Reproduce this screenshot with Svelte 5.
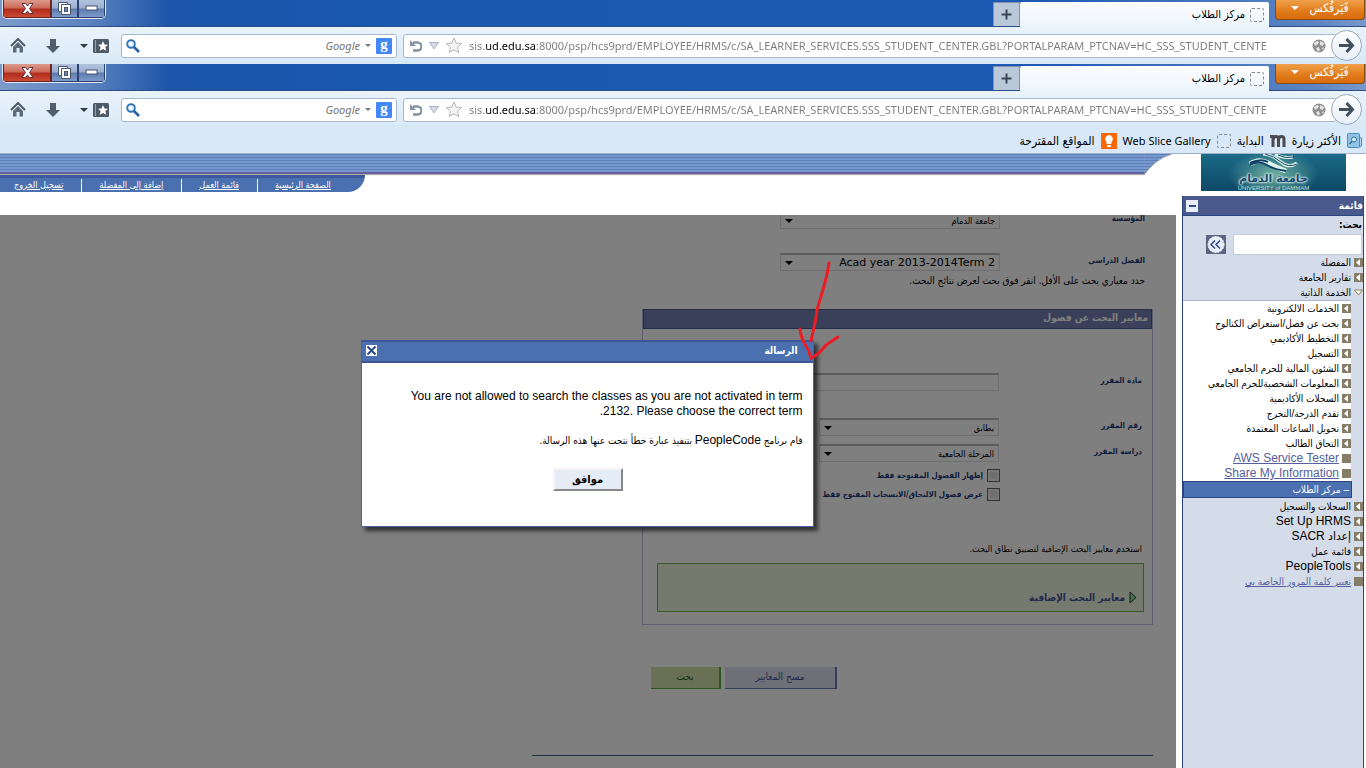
<script lang="ts">
  interface MenuItem {
    label: string;
    kind: 'folder' | 'open' | 'link';
  }

  const url = 'sis.ud.edu.sa:8000/psp/hcs9prd/EMPLOYEE/HRMS/c/SA_LEARNER_SERVICES.SSS_STUDENT_CENTER.GBL?PORTALPARAM_PTCNAV=HC_SSS_STUDENT_CENTE';

  const topLinks = ['الصفحة الرئيسية', 'قائمة العمل', 'إضافة إلى المفضلة', 'تسجيل الخروج'];

  const menuBefore: MenuItem[] = [
    { label: 'المفضلة', kind: 'folder' },
    { label: 'تقارير الجامعة', kind: 'folder' },
    { label: 'الخدمة الذاتية', kind: 'open' },
  ];

  const selfService: MenuItem[] = [
    { label: 'الخدمات الالكترونية', kind: 'folder' },
    { label: 'بحث عن فصل/استعراض الكتالوج', kind: 'folder' },
    { label: 'التخطيط الأكاديمي', kind: 'folder' },
    { label: 'التسجيل', kind: 'folder' },
    { label: 'الشئون المالية للحرم الجامعي', kind: 'folder' },
    { label: 'المعلومات الشخصيةللحرم الجامعي', kind: 'folder' },
    { label: 'السجلات الأكاديمية', kind: 'folder' },
    { label: 'تقدم الدرجة/التخرج', kind: 'folder' },
    { label: 'تحويل الساعات المعتمدة', kind: 'folder' },
    { label: 'التحاق الطالب', kind: 'folder' },
    { label: 'AWS Service Tester', kind: 'link' },
    { label: 'Share My Information', kind: 'link' },
  ];

  const menuAfter: MenuItem[] = [
    { label: 'السجلات والتسجيل', kind: 'folder' },
    { label: 'Set Up HRMS', kind: 'folder' },
    { label: 'إعداد SACR', kind: 'folder' },
    { label: 'قائمة عمل', kind: 'folder' },
    { label: 'PeopleTools', kind: 'folder' },
    { label: 'تغيير كلمة المرور الخاصة بي', kind: 'link' },
  ];

  let dialogOpen = $state(true);

  function hasLatin(text: string): boolean {
    return /[a-z]/i.test(text);
  }
</script>

{#snippet chrome(id: string)}
  <div class="titlebar">
    <button class="firefox">فَيَرفُكس <span class="caret"></span></button>
    <div class="tab">
      <span class="placeholder-icon"></span>
      <span>مركز الطلاب</span>
    </div>
    <button class="new-tab" aria-label="علامة تبويب جديدة">
      <svg width="11" height="11" viewBox="0 0 11 11"><path d="M5.5 0.5v10M0.5 5.5h10" stroke="#3c4652" stroke-width="2" /></svg>
    </button>
    <div class="window-buttons">
      <button aria-label="تصغير">
        <svg width="13" height="7" viewBox="0 0 13 7"><rect x="1" y="1" width="11" height="4" fill="#fff" stroke="#4c5570" /></svg>
      </button>
      <button aria-label="استعادة">
        <svg width="13" height="13" viewBox="0 0 13 13">
          <path d="M.5.5h9v2h3v10h-9v-3h-3z" fill="#fff" stroke="#4c5570" />
          <path d="M3.5 9.500v-7h6" fill="none" stroke="#4c5570" />
          <rect x="6.500" y="5.500" width="3" height="4" fill="#6f86b4" stroke="#4c5570" />
        </svg>
      </button>
      <button class="close" aria-label="إغلاق">
        <svg width="13" height="11" viewBox="0 0 13 11"><path d="M1 .5h3.500l2 2.500 2-2.500H12L8.500 5.500l3.500 5H8.500l-2-2.500-2 2.500H1l3.500-5z" fill="#fff" stroke="#5b3440" /></svg>
      </button>
    </div>
  </div>
  <div class="navbar">
    <button class="go" aria-label="انتقال">
      <svg width="17" height="17" viewBox="0 0 17 17"><path d="M1 8.500h13M8.500 2l6 6.500-6 6.500" fill="none" stroke="#424f5c" stroke-width="3" /></svg>
    </button>
    <div class="field url">
      <svg width="14" height="14" viewBox="0 0 14 14">
        <circle cx="7" cy="7" r="6.500" fill="#8f8f8f" />
        <path d="M2 4l3-2 2 1-1 2-3 2zM8 2l4 2-1 3-3-1zM4 9l3-1 1 3-2 2zM10 9l2-1-1 3z" fill="#e4e4e4" />
      </svg>
      <input aria-label="العنوان" id="url-{id}" value={url} dir="ltr" />
      <svg width="16" height="17" viewBox="0 0 16 17"><path d="M8 1l2.200 5 5.300.500-4 3.700 1.300 5.300L8 12.800l-4.800 2.700 1.300-5.300-4-3.700L5.800 6z" fill="#f4f4f4" stroke="#b4b4b4" /></svg>
      <svg width="10" height="8" viewBox="0 0 10 8"><path d="M.5.5h9L5 7z" fill="#d6dce4" stroke="#a9b4c2" /></svg>
      <svg width="12" height="12" viewBox="0 0 12 12"><path d="M3 2.500h4.500a3.500 3.500 0 0 1 0 8H3" fill="none" stroke="#8593a3" stroke-width="2.400" /><path d="M0 0v6h6z" fill="#8593a3" /></svg>
    </div>
    <div class="field search">
      <span class="google-badge">g</span>
      <span class="caret grey"></span>
      <input aria-label="بحث Google" id="search-{id}" placeholder="Google" />
      <svg width="14" height="14" viewBox="0 0 14 14"><circle cx="5" cy="5" r="3.800" fill="#f2f8ff" stroke="#3278b8" stroke-width="2" /><path d="M8 8l5 5" stroke="#2a5fa0" stroke-width="2.600" /></svg>
    </div>
    <button class="tool bookmarks" aria-label="العلامات">
      <svg width="16" height="14" viewBox="0 0 16 14">
        <rect width="16" height="14" rx="1.500" fill="#4d5a67" />
        <path d="M2.500 1v12" stroke="#97a3ae" />
        <path d="M10 2l1.500 3.400 3.500.400-2.600 2.300.800 3.700L10 9.900l-3.200 1.900.800-3.700L5 5.800l3.500-.400z" fill="#fff" />
      </svg>
      <span class="caret dark"></span>
    </button>
    <button class="tool download" aria-label="التنزيلات">
      <svg width="14" height="14" viewBox="0 0 14 14"><path d="M4 0h6v7h4l-7 7-7-7h4z" fill="#505e6c" /></svg>
    </button>
    <button class="tool home" aria-label="الرئيسية">
      <svg width="16" height="15" viewBox="0 0 16 15">
        <path d="M1 8l7-7 7 7" fill="none" stroke="#4b5966" stroke-width="2" />
        <path d="M3 9l5-5 5 5v5.500H9.500V10h-3v4.500H3z" fill="#5e6c7a" />
      </svg>
    </button>
  </div>
{/snippet}

{#snippet menu(items: MenuItem[])}
  {#each items as item}
    <li>
      <a href="#menu" class={item.kind}>
        <svg width="9" height="9" viewBox="0 0 9 9">
          {#if item.kind === 'open'}
            <path d="M.5 2h8L4.500 7z" fill="#fdf8e0" stroke="#8a8268" />
          {:else}
            <rect width="9" height="9" fill="#857d68" />
            {#if item.kind === 'folder'}<path d="M6 1v7L2 4.500z" fill="#fff" />{/if}
          {/if}
        </svg>
        <span class:latin-label={hasLatin(item.label)}>{item.label}</span>
      </a>
    </li>
  {/each}
{/snippet}

{#snippet arrow()}
  <svg class="drop" width="8" height="4" viewBox="0 0 8 4"><path d="M0 0h8L4 4z" fill="#000" /></svg>
{/snippet}

<div class="screen" dir="rtl">
  {@render chrome('back')}
  {@render chrome('front')}

  <div class="bookmark-bar">
    <a href="#most">
      <svg width="15" height="15" viewBox="0 0 15 15">
        <rect x=".5" y=".5" width="12" height="14" rx="1" fill="#8fc2e4" stroke="#4b8fbd" />
        <path d="M12.500 4l2 1v8l-2 1z" fill="#b6daf0" stroke="#4b8fbd" />
        <circle cx="7" cy="6.500" r="2.500" fill="#d8effc" stroke="#2f6f9e" /><path d="M5 8.500L2.500 11" stroke="#2f6f9e" stroke-width="1.500" />
      </svg>
      الأكثر زيارة
    </a>
    <a href="#start">
      <svg width="16" height="12" viewBox="0 0 16 12"><path d="M0 1.500h3V12M8.500 12V4q0-2.500-2.400-2.500T3 4.500M14 12V4q0-2.500-2.600-2.500T8.500 4.500" fill="none" stroke="#4b4b50" stroke-width="3" /></svg>
      البداية
    </a>
    <a href="#slice"><span class="placeholder-icon"></span><span class="latin">Web Slice Gallery</span></a>
    <a href="#sites">
      <svg width="16" height="16" viewBox="0 0 16 16">
        <rect width="16" height="16" fill="#f60" />
        <path d="M8 2a4 4 0 0 1 2.500 7v2h-5V9A4 4 0 0 1 8 2z" fill="#fff" /><rect x="6" y="12" width="4" height="2" fill="#fff" />
      </svg>
      المواقع المقترحة
    </a>
  </div>

  <header>
    <div class="logo">
      <svg width="58" height="19" viewBox="0 0 58 19" fill="none">
        <path d="M5 10Q14 4 23 9t18 8" stroke="#dff5ec" stroke-width="5" />
        <path d="M18 0q10 1 18 8t16 1M30 0q8 5 18 3" stroke="#dff5ec" stroke-width="3" />
        <path d="M5 11q9-5 17 0t19 6M5 9q11-5 18-1" stroke="#0e3f66" stroke-width="2" />
        <path d="M20 0q9 2 16 8t16 2M33 1q7 4 16 2" stroke="#0e3f66" />
      </svg>
      <strong>جامعة الدمام</strong>
      <small>UNIVERSITY of DAMMAM</small>
    </div>
    <div class="banner">
      <svg class="swoop" width="28" height="21" viewBox="0 0 28 21">
        <path d="M28 0H0v21q4-6 11-12T28 0z" fill="url(#swoop-fill)" />
        <path d="M0 21q4-6 11-12T28 0" fill="none" stroke="#a9a5b4" />
        <defs>
          <pattern id="swoop-fill" width="3" height="3" patternUnits="userSpaceOnUse"><rect width="3" height="3" fill="#7798cf" /><rect width="3" height="1" fill="#5b80ba" /></pattern>
        </defs>
      </svg>
      <div class="stripes"></div>
      <nav>
        {#each topLinks as link}
          <a href="#top"><span>{link}</span></a>
        {/each}
      </nav>
    </div>
  </header>

  <div class="portal">
    <aside>
      <h2>قائمة <button aria-label="تصغير القائمة"></button></h2>
      <form class="menu-search">
        <label for="menu-search">بحث:</label>
        <div>
          <input id="menu-search" />
          <button type="button" aria-label="بحث">
            <svg width="20" height="19" viewBox="0 0 20 19">
              <rect width="20" height="19" fill="#5d6480" />
              <circle cx="10" cy="9.500" r="8" fill="#e6edfb" stroke="#fff" stroke-dasharray="2 1" />
              <path d="M9 5.500l-4 4 4 4M14 5.500l-4 4 4 4" fill="none" stroke="#34478a" stroke-width="1.500" />
            </svg>
          </button>
        </div>
      </form>
      <ul>{@render menu(menuBefore)}</ul>
      <ul class="nested">
        {@render menu(selfService)}
        <li class="current"><a href="#center">– مركز الطلاب</a></li>
      </ul>
      <ul>{@render menu(menuAfter)}</ul>
    </aside>

    <main>
      <form class="criteria">
        <div class="row">
          <label for="institution">المؤسسة</label>
          <span class="select"><select id="institution"><option>جامعة الدمام</option></select>{@render arrow()}</span>
        </div>
        <div class="row term">
          <label for="term">الفصل الدراسي</label>
          <span class="select"><select id="term" class="verdana"><option>Acad year 2013-2014Term 2</option></select>{@render arrow()}</span>
        </div>
        <p class="hint">حدد معياري بحث على الأقل. انقر فوق بحث لعرض نتائج البحث.</p>

        <section>
          <h3>معايير البحث عن فصول</h3>
          <div class="fields">
            <div class="row subject">
              <label for="subject">مادة المقرر</label>
              <input id="subject" type="text" />
            </div>
            <div class="row number">
              <label for="number">رقم المقرر</label>
              <span class="select"><select id="number"><option>يطابق</option></select>{@render arrow()}</span>
            </div>
            <div class="row career">
              <label for="career">دراسة المقرر</label>
              <span class="select"><select id="career"><option>المرحلة الجامعية</option></select>{@render arrow()}</span>
            </div>
            <label class="check"><input type="checkbox" /> إظهار الفصول المفتوحة فقط</label>
            <label class="check"><input type="checkbox" /> عرض فصول الالتحاق/الانسحاب المفتوح فقط</label>
            <p class="note">استخدم معايير البحث الإضافية لتضييق نطاق البحث.</p>
          </div>
          <div class="extra">
            <a href="#extra">
              <svg width="8" height="13" viewBox="0 0 8 13"><path d="M1 1l6 5.500-6 5.500z" fill="#9cd89c" stroke="#14401c" /></svg>
              معايير البحث الإضافية
            </a>
          </div>
        </section>

        <div class="actions">
          <button type="button" class="clear">مسح المعايير</button>
          <button type="button" class="find">بحث</button>
        </div>
        <hr />
      </form>

      {#if dialogOpen}
        <div class="overlay"></div>
        <div class="dialog" role="dialog" aria-labelledby="dialog-title">
          <div class="dialog-title">
            <h1 id="dialog-title">الرسالة</h1>
            <button aria-label="إغلاق" onclick={() => (dialogOpen = false)}>
              <svg width="11" height="11" viewBox="0 0 11 11"><path d="M1.500 1.500l8 8M9.500 1.500l-8 8" stroke="#2f4a88" stroke-width="2" /></svg>
            </button>
          </div>
          <div class="dialog-body">
            <p>You are not allowed to search the classes as you are not activated in term 2132. Please choose the correct term.</p>
            <p class="arabic">قام برنامج <span>PeopleCode</span> بتنفيذ عبارة خطأ نتجت عنها هذه الرسالة.</p>
            <button onclick={() => (dialogOpen = false)}>موافق</button>
          </div>
          <svg class="pointer" width="44" height="102" viewBox="0 0 44 102">
            <path d="M32 3C30 20 24 35 20 50C19 62 16 70 14 81M3 69Q4 78 8 84T14 98C20 96 25 90 29 85L41 77" />
          </svg>
        </div>
      {/if}
    </main>
  </div>
</div>

<style>
  :global(body) {
    background: #fff;
  }

  .screen {
    display: flex;
    flex-direction: column;
    min-height: 100vh;
    font-family: "Liberation Sans", "DejaVu Sans", sans-serif;
    font-size: 12px;
    color: #000;
  }

  .screen :is(div, form, section, header, nav, main, aside, button, input, select, span, a) {
    box-sizing: border-box;
  }

  button,
  input,
  select {
    font: inherit;
    color: inherit;
    margin: 0;
    padding: 0;
    border-radius: 0;
  }

  button {
    display: flex;
    align-items: center;
    justify-content: center;
    border: 0;
    background: none;
  }

  ul,
  p,
  h1,
  h2,
  h3 {
    margin: 0;
    padding: 0;
    list-style: none;
  }

  svg {
    flex: none;
    display: block;
  }

  /* browser window */
  .titlebar {
    display: flex;
    align-items: flex-start;
    height: 27px;
    padding: 0 1px 0 2px;
    border-bottom: 1px solid #2c4c82;
    background: linear-gradient(90deg, #7c9bcb 0, #5a82c0 90px, #1c55a9 170px, #1a58b2 30%, #1b59b3 75%, #5b84c4 96%, #7898cc);
  }

  .firefox {
    gap: 10px;
    width: 90px;
    height: 20px;
    margin-left: 6px;
    padding-bottom: 3px;
    border: 1px solid #8c4a10;
    border-top: 0;
    border-radius: 0 0 4px 4px;
    background: linear-gradient(#f0a04c, #e07a18 60%, #d96c0c);
    color: #fff;
    font-family: "DejaVu Sans Condensed", "DejaVu Sans", sans-serif;
    font-size: 12px;
    line-height: 14px;
  }

  .caret {
    border: 4px solid transparent;
    border-top-color: #fff;
    border-bottom: 0;
  }

  .caret.grey {
    border-width: 3px;
    border-bottom: 0;
    border-top-color: #777;
  }

  .caret.dark {
    border-top-color: #333c45;
  }

  .tab {
    display: flex;
    align-items: center;
    gap: 5px;
    width: 249px;
    height: 25px;
    margin-top: 2px;
    padding: 0 5px;
    border-radius: 2px 2px 0 0;
    background: linear-gradient(#fdfeff, #ecf4fc);
    font-family: "DejaVu Sans Condensed", "DejaVu Sans", sans-serif;
    font-size: 11px;
  }

  .placeholder-icon {
    width: 14px;
    height: 14px;
    border: 1px dashed #888;
    border-radius: 2px;
  }

  .new-tab {
    width: 27px;
    height: 24px;
    margin: 2px 0 0 1px;
    border: 1px solid #7d93ad;
    border-bottom: 0;
    background: #b9c9da;
  }

  .window-buttons {
    display: flex;
    height: 19px;
    margin-right: auto;
    border: 1px solid #dfe8f4;
    border-top: 0;
    border-radius: 0 0 5px 5px;
    overflow: hidden;
  }

  .window-buttons button {
    width: 27px;
    border: 1px solid #2d416e;
    border-top: 0;
    background: linear-gradient(#b3c3de, #9bb0d3 45%, #5f7db0 55%, #7c9acb);
  }

  .window-buttons .close {
    width: 48px;
    border-color: #6a2420;
    background: linear-gradient(#dc9a8c, #cc6a58 45%, #b02c1c 55%, #cc4a34);
  }

  .navbar {
    display: flex;
    align-items: center;
    height: 37px;
    padding: 0 4px 0 10px;
    background: linear-gradient(#e9f3fc, #dae8f6);
  }

  .go {
    z-index: 1;
    width: 31px;
    height: 31px;
    margin-left: -6px;
    border: 1px solid #94aac2;
    border-radius: 50%;
    background: linear-gradient(#fdfeff, #e8eff7);
  }

  .field {
    display: flex;
    align-items: center;
    height: 24px;
    border: 1px solid #a5b8cd;
    border-radius: 3px;
    background: #fff;
  }

  .field input {
    flex: 1;
    min-width: 0;
    height: 20px;
    border: 0;
    outline: 0;
    background: none;
    font-family: "Noto Sans", "Open Sans", sans-serif;
    font-size: 11px;
  }

  .url {
    flex: 1;
    gap: 7px;
    padding: 0 10px 0 6px;
  }

  /* host name is darker than the rest of the address */
  .url input {
    background: linear-gradient(90deg, #7b7b7b 16px, #000 16px 68px, #7b7b7b 68px);
    -webkit-background-clip: text;
    background-clip: text;
    -webkit-text-fill-color: transparent;
  }

  .search {
    gap: 5px;
    width: 276px;
    margin: 0 6px 0 12px;
    padding: 0 4px;
  }

  .search input::placeholder {
    color: #777;
    opacity: 1;
    font-style: italic;
  }

  .google-badge {
    width: 16px;
    height: 16px;
    border-radius: 1px;
    background: #4486f4;
    color: #fff;
    font: bold 15px/13px "Liberation Serif", serif;
    text-align: center;
  }

  .bookmarks {
    gap: 5px;
  }

  .download {
    margin: 0 20px;
  }

  .bookmark-bar {
    display: flex;
    align-items: center;
    gap: 6px;
    height: 26px;
    padding: 0 4px;
    border-bottom: 1px solid #a3b3c6;
    background: #d9e8f8;
    font-family: "DejaVu Sans Condensed", "DejaVu Sans", sans-serif;
    font-size: 12px;
  }

  .bookmark-bar a {
    display: flex;
    align-items: center;
    gap: 6px;
    color: #000;
    text-decoration: none;
  }

  .latin {
    font-family: "Noto Sans", sans-serif;
    font-size: 11px;
  }

  /* portal header */
  header {
    display: flex;
    height: 42px;
    padding-right: 20px;
  }

  .logo {
    display: flex;
    flex-direction: column;
    align-items: center;
    width: 145px;
    height: 37px;
    margin-left: 29px;
    background: radial-gradient(ellipse 46px 24px at 50% 55%, #6fb0a0, #1b6b8800), linear-gradient(#1a6a88, #0d4866);
    color: #fff;
  }

  .logo strong {
    color: #14486c;
    font: bold 11px/12px "DejaVu Sans", sans-serif;
    text-shadow: 0 0 2px #e8f8f0, 0 0 2px #e8f8f0, 0 0 3px #e8f8f0;
  }

  .logo small {
    color: #c4e0dc;
    font: 6px/6px "Liberation Sans", sans-serif;
  }

  .banner {
    flex: 1;
    display: grid;
    grid-template-columns: 28px 1fr;
    align-content: start;
  }

  .stripes {
    height: 20px;
    border-bottom: 2px solid #66609f;
    background: repeating-linear-gradient(#5b80ba 0 1px, #7798cf 1px 3px);
    box-shadow: 0 1px 1px #aaa;
  }

  nav {
    grid-column: 2;
    justify-self: end;
    display: flex;
    align-items: center;
    height: 17px;
    padding-right: 34px;
    border-top: 3px solid #3d5a9c;
    border-radius: 0 0 20px 0;
    background: #4a70b0;
  }

  nav a {
    padding: 0 18px 0 17px;
    border-left: 1px solid #fff;
    color: #fff;
    font: 9px/13px "DejaVu Sans Condensed", "DejaVu Sans", sans-serif;
  }

  nav a:first-child {
    padding-right: 0;
  }

  nav a:last-child {
    padding-left: 14px;
    border-left: 0;
  }

  /* side menu */
  .portal {
    flex: 1;
    display: flex;
    padding-right: 2px;
  }

  aside {
    width: 182px;
    margin-left: 6px;
    border: 1px solid #2a4580;
    border-width: 0 1px;
    background: #d5dce9;
  }

  h2 {
    display: flex;
    align-items: center;
    justify-content: space-between;
    height: 20px;
    padding-left: 3px;
    border-bottom: 1px solid #2a4580;
    box-sizing: border-box;
    background: #4a5a8c;
    color: #fff;
    font: bold 10px/18px "DejaVu Sans Condensed", "DejaVu Sans", sans-serif;
  }

  h2 button {
    width: 12px;
    height: 12px;
    background: linear-gradient(#34478a, #34478a) center / 7px 2px no-repeat #e8eefa;
  }

  .menu-search {
    padding: 0 1px;
  }

  .menu-search label {
    display: block;
    height: 18px;
    font: bold 10px/18px "DejaVu Sans Condensed", "DejaVu Sans", sans-serif;
  }

  .menu-search div {
    display: flex;
    align-items: center;
    gap: 7px;
  }

  .menu-search input {
    width: 129px;
    height: 21px;
    border: 1px solid #c3cbd9;
    background: #fff;
  }

  li a {
    display: flex;
    align-items: center;
    gap: 3px;
    height: 15px;
    color: #000;
    font: 10px/15px "Liberation Sans", "DejaVu Sans Condensed", sans-serif;
    text-decoration: none;
    white-space: nowrap;
  }

  .latin-label {
    font-size: 12px;
  }

  li .link {
    color: #54609c;
    text-decoration: underline;
  }

  .nested {
    margin: 0 12px 1px 0;
    border-top: 1px solid #a9b8d4;
    background: #fff;
  }

  .current a {
    height: 17px;
    margin-right: -1px;
    padding-right: 2px;
    border: 1px solid #2a4580;
    background: #4a70b0;
    color: #fff;
  }

  /* search page */
  main {
    flex: 1;
    position: relative;
    margin-top: 19px;
    overflow: hidden;
    background: #fff;
    font-family: "DejaVu Sans Condensed", "DejaVu Sans", sans-serif;
    font-size: 9px;
  }

  .criteria {
    margin-top: -4px;
    padding-right: 23px;
  }

  .row {
    display: flex;
    padding-right: 8px;
  }

  .row label {
    width: 145px;
    color: #1f3a78;
    font-size: 8px;
    font-weight: bold;
    line-height: 16px;
  }

  .select {
    position: relative;
    width: 220px;
    height: 18px;
  }

  select,
  .row input {
    appearance: none;
    width: 100%;
    height: 18px;
    padding: 0 4px;
    border: 1px solid #dcdce0;
    border-top: 2px solid #b8b8bc;
    background: #fff;
    font-size: 9px;
  }

  select.verdana {
    font-family: "DejaVu Sans", sans-serif;
    font-size: 11px;
  }

  .drop {
    position: absolute;
    left: 5px;
    top: 8px;
  }

  .term {
    margin-top: 24px;
  }

  .hint {
    padding-right: 8px;
    font-size: 10px;
    line-height: 20px;
  }

  section {
    width: 511px;
    margin-top: 18px;
    border: 1px solid #b4bcdc;
    border-top: 0;
  }

  h3 {
    height: 20px;
    box-sizing: border-box;
    padding: 0 3px;
    border: 1px solid #4a5a90;
    background: #7480b4;
    color: #fff;
    font-size: 10px;
    font-weight: bold;
    line-height: 15px;
  }

  .fields {
    padding: 44px 2px 0 0;
  }

  .fields .row label {
    width: 143px;
  }

  .row input {
    width: 240px;
  }

  .number {
    margin-top: 27px;
  }

  .career {
    margin-top: 8px;
  }

  .fields .select {
    width: 180px;
  }

  .check {
    display: flex;
    align-items: center;
    gap: 4px;
    margin: 7px 150px 0 0;
    height: 12px;
    color: #1f3a78;
    font-size: 8px;
    font-weight: bold;
  }

  .check input {
    appearance: none;
    width: 13px;
    height: 13px;
    border: 1px solid #666;
    background: #ddd;
    box-shadow: inset 0 0 0 2px #eee;
  }

  .note {
    margin-top: 39px;
    padding-right: 8px;
    line-height: 20px;
  }

  .extra {
    display: flex;
    align-items: flex-end;
    height: 49px;
    margin: 4px 8px 12px 14px;
    padding: 7px 6px;
    border: 1px solid #6cb84c;
    background: #ebf3dc;
  }

  .extra a {
    display: flex;
    align-items: center;
    gap: 4px;
    color: #46559c;
    font-size: 10px;
    font-weight: bold;
    text-decoration: none;
  }

  .actions {
    display: flex;
    gap: 4px;
    margin: 42px 316px 0 0;
  }

  .actions button {
    height: 22px;
    padding-bottom: 3px;
    border: 0 solid #6a78b4;
    border-width: 0 2px 1px 0;
    font-size: 10px;
  }

  .actions .clear {
    width: 112px;
    background: #dcdfee;
    color: #46559c;
  }

  .actions .find {
    width: 70px;
    border-color: #5eaa3c;
    background: #d2e0a8;
    color: #2c6a1c;
  }

  hr {
    width: 621px;
    height: 1px;
    margin: 66px 0 12px auto;
    border: 0;
    background: #4a5a90;
  }

  .overlay {
    position: absolute;
    inset: 0;
    background: rgba(0, 0, 0, 0.5);
  }

  .dialog {
    position: absolute;
    top: 125px;
    left: 0;
    right: 2px;
    width: 453px;
    margin: 0 auto;
    border: 1px solid #4a62a4;
    border-width: 0 1px 1px;
    background: #fff;
    box-shadow: 4px 4px 4px rgba(0, 0, 0, 0.6);
    font-size: 12px;
  }

  .dialog-title {
    display: flex;
    align-items: center;
    justify-content: space-between;
    height: 23px;
    padding: 0 15px 2px 4px;
    border: 2px solid #3f5696;
    border-width: 2px 0;
    background: #4a70b0;
    color: #fff;
  }

  h1 {
    font: bold 10px/16px "DejaVu Sans Condensed", "DejaVu Sans", sans-serif;
  }

  .dialog-title button {
    width: 11px;
    height: 11px;
    background: #fff;
  }

  .dialog-body {
    padding: 26px 10px 35px 38px;
    font: 12px/15px "Liberation Sans", sans-serif;
  }

  .arabic {
    margin: 14px 0 20px;
    font: 10px/15px "DejaVu Sans Condensed", "DejaVu Sans", sans-serif;
  }

  .arabic span {
    font: 12px/15px "Liberation Sans", sans-serif;
  }

  .dialog-body button {
    width: 70px;
    height: 23px;
    margin-right: 180px;
    border: 2px solid;
    border-color: #f4f4f4 #888 #888 #f4f4f4;
    background: #e6ecf5;
    font: bold 11px/15px "DejaVu Sans Condensed", "DejaVu Sans", sans-serif;
  }

  .pointer {
    position: absolute;
    top: -80px;
    right: -28px;
    fill: none;
    stroke: #ed1c24;
    stroke-width: 3;
    stroke-linecap: round;
  }
</style>
